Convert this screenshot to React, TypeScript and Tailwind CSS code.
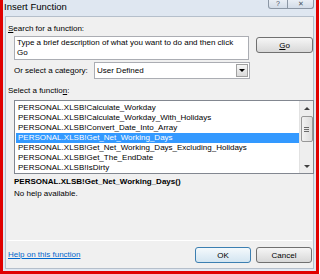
import React from 'react';

const functions = [
  'PERSONAL.XLSB!Calculate_Workday',
  'PERSONAL.XLSB!Calculate_Workday_With_Holidays',
  'PERSONAL.XLSB!Convert_Date_Into_Array',
  'PERSONAL.XLSB!Get_Net_Working_Days',
  'PERSONAL.XLSB!Get_Net_Working_Days_Excluding_Holidays',
  'PERSONAL.XLSB!Get_The_EndDate',
  'PERSONAL.XLSB!IsDirty',
];

const selected = 3;

const WinButton: React.FC<{ children: React.ReactNode; primary?: boolean; className?: string }> = ({
  children,
  primary,
  className = '',
}) => (
  <div
    className={`flex items-center justify-center rounded-[3px] border text-[8px] text-black ${
      primary
        ? 'border-[#3c7fb1] bg-linear-to-b from-[#f4f9fc] to-[#d3e5f1]'
        : 'border-[#707070] bg-linear-to-b from-[#f6f6f6] to-[#d8d8d8]'
    } ${className}`}
  >
    {children}
  </div>
);

export default function App() {
  return (
    <div className="w-[320px] h-[274px] bg-white overflow-hidden font-['Liberation_Sans',Arial,sans-serif]">
      <div className="w-[319px] h-[274px] flex flex-col border-l-[3px] border-r-[3px] border-b-[3px] border-[#e00000] bg-[#dfe7f1]">
        {/* title bar */}
        <div className="h-[16px] flex items-start justify-between shrink-0">
          <span className="pl-[1px] pt-[1px] text-[9.5px] leading-[12px] text-black">Insert Function</span>
          <div className="flex mr-[2px]">
            <div className="w-[20px] h-[9px] border border-t-0 border-[#8c97a5] rounded-bl-[3px] bg-linear-to-b from-[#e9eef5] to-[#d3dce8] flex items-end justify-center">
              <span className="text-[7px] leading-[8px] text-[#4a5563]">?</span>
            </div>
            <div className="w-[26px] h-[9px] border border-t-0 border-l-0 border-[#8c97a5] rounded-br-[3px] bg-linear-to-b from-[#e9eef5] to-[#d3dce8] flex items-end justify-center">
              <span className="text-[7px] leading-[8px] text-[#4a5563]">✕</span>
            </div>
          </div>
        </div>

        {/* client area */}
        <div className="flex-1 mx-[2px] mb-[2px] bg-[#f0f0f0] border border-[#b5bfcb] flex flex-col pl-[1px] text-[8px] leading-[11px] text-black">
          <div className="pt-[6px] pl-[1px]">
            <span className="underline">S</span>earch for a function:
          </div>

          <div className="flex items-start mt-[2px] ml-[7px]">
            <div className="w-[236px] h-[24px] bg-white border border-[#abadb3] px-[2px] pt-[1px] leading-[10px]">
              Type a brief description of what you want to do and then click
              <br />
              Go
            </div>
            <WinButton className="ml-[7px] mt-[1px] w-[57px] h-[16px]">
              <span className="underline">G</span>o
            </WinButton>
          </div>

          <div className="flex items-center mt-[2px] ml-[7px]">
            <span className="w-[80px]">
              Or select a cate<span className="underline">g</span>ory:
            </span>
            <div className="w-[156px] h-[17px] bg-white border border-[#abadb3] flex items-center justify-between pl-[2px]">
              <span>User Defined</span>
              <div className="w-[12px] h-[13px] mr-[1px] border border-[#a0a0a0] bg-linear-to-b from-[#f6f6f6] to-[#dadada] flex items-center justify-center">
                <div className="w-0 h-0 border-l-[3px] border-r-[3px] border-t-[3px] border-l-transparent border-r-transparent border-t-black" />
              </div>
            </div>
          </div>

          <div className="mt-[6px] pl-[1px]">
            Select a functio<span className="underline">n</span>:
          </div>

          <div className="mt-[4px] ml-[7px] w-[300px] h-[74px] bg-white border border-[#828790] flex">
            <div className="flex-1 pt-[2px] pl-[1px]">
              {functions.map((f, i) => (
                <div
                  key={f}
                  className={`h-[10px] leading-[10px] pl-[2px] whitespace-nowrap ${
                    i === selected ? 'bg-[#3399ff] text-white' : ''
                  }`}
                >
                  {f}
                </div>
              ))}
            </div>
            <div className="w-[14px] bg-[#eeeeee] border-l border-[#e2e2e2] flex flex-col items-center">
              <div className="h-[14px] flex items-center justify-center">
                <div className="w-0 h-0 border-l-[3px] border-r-[3px] border-b-[3px] border-l-transparent border-r-transparent border-b-[#404040]" />
              </div>
              <div className="mt-[1px] w-[12px] h-[26px] rounded-[2px] border border-[#979797] bg-linear-to-r from-[#f2f2f2] to-[#dcdcdc] flex flex-col items-center justify-center gap-[1px]">
                <div className="w-[5px] h-[1px] bg-[#6a6a6a]" />
                <div className="w-[5px] h-[1px] bg-[#6a6a6a]" />
                <div className="w-[5px] h-[1px] bg-[#6a6a6a]" />
              </div>
              <div className="flex-1" />
              <div className="h-[14px] flex items-center justify-center">
                <div className="w-0 h-0 border-l-[3px] border-r-[3px] border-t-[3px] border-l-transparent border-r-transparent border-t-[#404040]" />
              </div>
            </div>
          </div>

          <div className="ml-[7px] mt-[2px] font-bold">PERSONAL.XLSB!Get_Net_Working_Days()</div>
          <div className="ml-[7px] mt-[1px]">No help available.</div>

          <div className="flex-1" />
          <div className="h-px bg-[#dfdfdf] border-b border-white mr-[1px]" />

          <div className="flex items-center justify-between h-[27px] pl-[1px] pr-[1px]">
            <span className="text-[#0066cc] underline">Help on this function</span>
            <div className="flex gap-[5px] mt-[1px]">
              <WinButton primary className="w-[56px] h-[16px]">
                OK
              </WinButton>
              <WinButton className="w-[56px] h-[16px]">Cancel</WinButton>
            </div>
          </div>
        </div>
      </div>
    </div>
  );
}
